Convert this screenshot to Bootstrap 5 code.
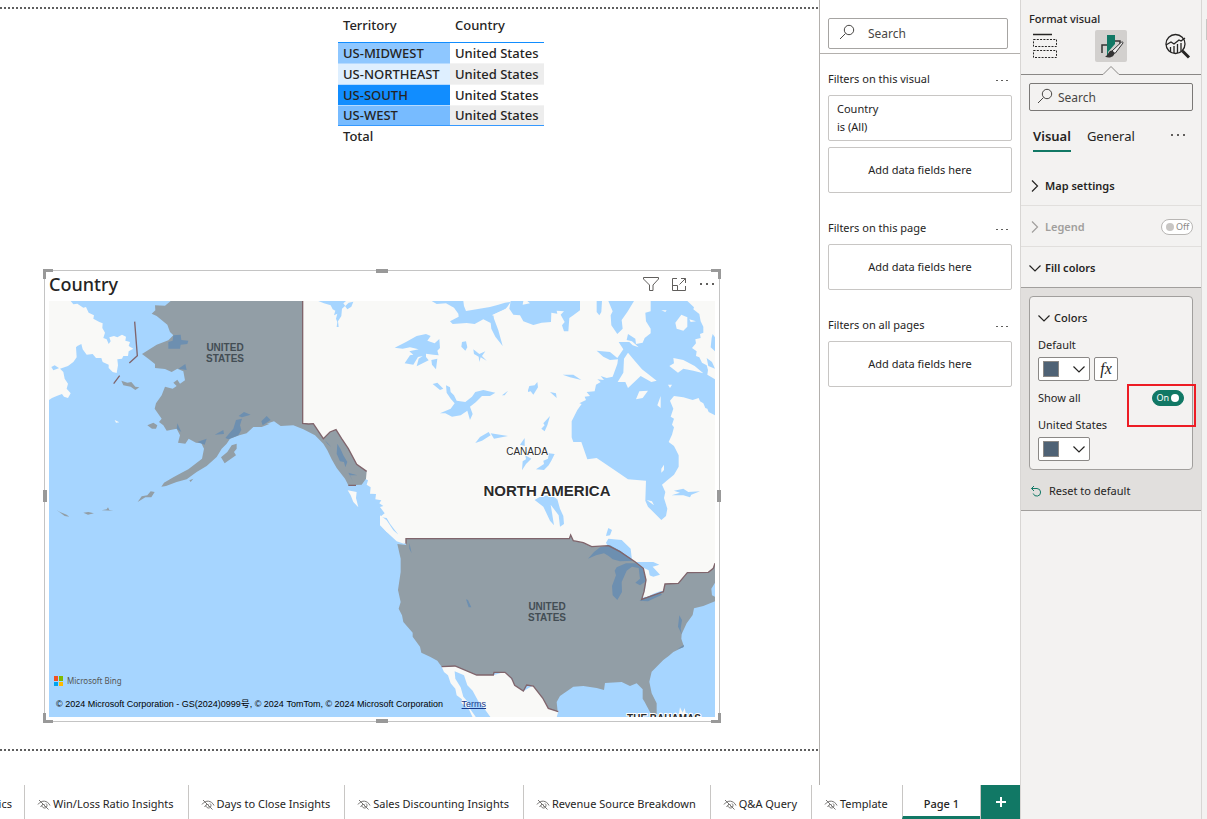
<!DOCTYPE html>
<html lang="en">
<head>
<meta charset="utf-8">
<meta name="viewport" content="width=device-width, initial-scale=1">
<title>Report editor</title>
<link href="https://cdn.jsdelivr.net/npm/bootstrap@5.3.0/dist/css/bootstrap.min.css" rel="stylesheet">
<style>
:root { --ink:#252423; --teal:#117865; --pane:#f3f2f1; }
body { font-family:"Noto Sans","Open Sans",sans-serif; font-size:11px; line-height:18px; color:var(--ink); background:#fff; }
button { font:inherit; color:inherit; }
svg { display:block; flex:none; }
.ico { fill:none; stroke:currentColor; }
.workspace { min-width:0; }
/* canvas */
.canvas { min-width:0; padding-top:7px; }
.sheet { min-height:743px; position:relative; }
.dots { height:2px; background:repeating-linear-gradient(90deg,#5f5f5f 0 2px,#fff 2px 4px); }
.grid-visual { margin:6px 0 0 338px; font-size:13px; line-height:19px; border-collapse:separate; border-spacing:0; }
.grid-visual th, .grid-visual td { padding:0 6px 0 5px; height:20px; font-weight:500; text-align:left; white-space:nowrap; }
.grid-visual tbody th, .grid-visual tbody td { height:21px; border-bottom:1px solid #f3f3f3; }
.grid-visual tbody th { border-bottom-color:#b5daff; min-width:112px; }
.grid-visual thead th { height:28px; padding-top:1px; vertical-align:top; border-bottom:1px solid #118dff; }
.grid-visual tbody tr:last-child > * { height:20px; border-bottom:1px solid #3599ff; }
.grid-visual tbody tr:nth-child(even) td { background:#ededed; }
.t-mid { background:#8ec7ff; } .t-ne { background:#deefff; } .t-so { background:#118dff; } .t-we { background:#77bbff; }
.map-visual { position:relative; margin:124px 99px 27px 44px; border:1px solid #c4c4c4; padding:0 4px 4px 4px; }
.map-title { font-size:18px; line-height:24px; font-weight:500; }
.map-head { height:30px; padding-bottom:4px; }
.map-head .btn { padding:0; border:0; color:#605e5c; }
.map-box { position:relative; overflow:hidden; }
.map-box > svg { width:100%; height:auto; }
.map-box text { font-family:"Liberation Sans",Arial,sans-serif; }
.bing { left:5px; bottom:27px; font-size:8px; line-height:18px; color:#555; }
.credits { left:7px; bottom:4px; font:9px/18px "Liberation Sans","Noto Sans CJK SC",sans-serif; color:#000; }
.credits a { color:#1a3c8c; }
.grip { position:absolute; background:#999; }
.grip.n, .grip.s { width:12px; height:4px; left:50%; margin-left:-6px; } .grip.n { top:-2px; } .grip.s { bottom:-2px; }
.grip.w, .grip.e { width:4px; height:12px; top:50%; margin-top:-6px; } .grip.w { left:-2px; } .grip.e { right:-2px; }
.corner { position:absolute; width:10px; height:10px; border:0 solid #999; }
.nw { left:-2px; top:-2px; border-width:3px 0 0 3px; } .ne { right:-2px; top:-2px; border-width:3px 3px 0 0; }
.sw { left:-2px; bottom:-2px; border-width:0 0 3px 3px; } .se { right:-2px; bottom:-2px; border-width:0 3px 3px 0; }
/* filters */
.filters { width:201px; flex:none; border-left:1px solid #b3b0ad; }
.find { position:relative; }
.find svg { position:absolute; left:8px; top:5px; pointer-events:none; color:#484644; }
.find input { width:100%; background:transparent; border:1px solid #a6a4a2; border-radius:2px; color:var(--ink); font-size:12px; outline:0; }
.find input::placeholder { color:#484644; opacity:1; }
.filters .find { padding:18px 12px 4px 8px; border-bottom:1px solid #b3b0ad; }
.filters .find svg { left:19px; top:24px; }
.filters .find input { height:31px; padding:0 8px 0 39px; }
.fgroup { padding:0 8px; }
.fgroup + .fgroup { padding-top:10px; }
.fhead { height:41px; padding-top:9px; }
.fhead button, .more { border:0; background:none; padding:0 3px; color:#605e5c; }
.fhead button { padding:4px 4px 0; }
.fcard { border:1px solid #c8c6c4; border-radius:2px; height:46px; background:#fff; }
.fcard + .fcard { margin-top:6px; }
/* page tabs */
.pages { height:34px; overflow:hidden; }
.pages a { flex:0 0 auto; gap:2px; color:var(--ink); text-decoration:none; border-left:1px solid #c8c6c4; padding:4px 14px 0 12px; white-space:nowrap; }
.pages a.cut { width:24px; border:0; padding:4px 12px 0 0; justify-content:flex-end !important; }
.pages a svg { color:#767472; }
.pages a.now { flex:1 0 auto; border-bottom:3px solid var(--teal); font-weight:500; padding:7px 12px 0; }
.pages button { width:40px; flex:none; background:var(--teal); color:#fff; border:0; border-left:1px solid #c8c6c4; padding:0; }
/* format pane */
.format { width:187px; flex:none; background:var(--pane); border-left:1px solid #d8d6d4; padding-right:5px; position:relative; }
.format-in { border-right:1px solid #d8d6d4; min-height:100%; }
.thumb { position:absolute; right:0; top:19px; width:1px; height:21px; background:#c8c6c4; }
.format h1 { font-size:11px; line-height:18px; font-weight:500; margin:0; padding:10px 8px 2px; }
.modes { padding:0 8px; height:44px; align-items:flex-start; }
.modes button { width:32px; height:32px; border:0; padding:0; border-radius:2px; background:none; }
.modes button.on { background:#d2d0ce; }
.notch { width:100%; height:9px; margin-top:-8px; }
.format .find { margin:8px 8px 0; }
.format .find input { height:28px; padding:0 8px 0 28px; border-color:#7a7876; }
.kinds { padding:14px 12px 0; gap:16px; font-size:13px; line-height:22px; height:54px; }
.kinds a { color:var(--ink); text-decoration:none; height:27px; }
.kinds a.on { border-bottom:2px solid var(--teal); font-weight:600; }
.acc { width:100%; height:41px; border:0; border-bottom:1px solid #e1dfdd; background:none; padding:1px 8px 0; gap:4px; font-weight:600; text-align:left; }
.acc.open { height:40px; border:0; }
.acc.dim { color:#a19f9d; }
.fill { background:#e1dfdd; border-top:1px solid #a19f9d; border-bottom:1px solid #a19f9d; padding:8px 8px 10px; }
.panel { background:var(--pane); border:1px solid #a19f9d; border-radius:4px; padding:12px 8px 8px; position:relative; }
.panel button, .swatch { height:24px; border:1px solid #8a8886; border-radius:2px; background:#fff; padding:0 4px; }
.panel .plain { border:0; background:none; padding:0; gap:4px; height:18px; font-weight:500; }
.cap { margin:9px 0 3px; }
.swatch { width:52px; }
.swatch i { width:16px; height:16px; background:#4f6275; border:1px solid #8a8886; }
.fx { width:24px; font:italic 16px/20px "Liberation Serif",serif !important; }
.toggle { width:32px; height:16px; border-radius:8px; border:1px solid #b8b6b4; background:#fff; color:#8a8886; font-size:9px; line-height:14px; padding:0 4px; gap:2px; font-weight:400; }
.toggle input { position:absolute; opacity:0; width:1px; height:1px; }
.toggle::before { content:""; width:8px; height:8px; border-radius:50%; background:#c8c6c4; flex:none; }
.toggle.yes { background:var(--teal); border-color:var(--teal); color:#fff; flex-direction:row-reverse; }
.toggle.yes::before { background:#fff; }
.callout { position:absolute; right:-4px; top:87px; width:69px; height:43px; border:2px solid #ed1c24; pointer-events:none; }
.reset { border:0; background:none; padding:0; margin:12px 0 0 1px; gap:7px; }
.reset svg { color:var(--teal); }
</style>
</head>
<body>
<svg width="0" height="0" class="position-absolute" aria-hidden="true">
  <symbol id="lens" viewBox="0 0 16 16"><circle cx="10" cy="6" r="4.700" fill="none" stroke="currentColor"/><path d="M6.500 9.500 1 15" stroke="currentColor"/></symbol>
  <symbol id="hid" viewBox="0 0 14 14"><path d="M1 7.500C3 4.600 5.500 4 7.500 4.200S12 6 13 8.500M5 8.500a2.500 2.500 0 1 0 4-2M7.500 7.500v2M2 3l9.500 9.500M3.500 10 6 7" fill="none" stroke="currentColor"/></symbol>
  <symbol id="down" viewBox="0 0 12 12"><path d="M.5 3.500 6 9l5.500-5.500" fill="none" stroke="currentColor" stroke-width="1.200"/></symbol>
  <symbol id="right" viewBox="0 0 12 12"><path d="M3 .5 8.500 6 3 11.500" fill="none" stroke="currentColor" stroke-width="1.200"/></symbol>
  <symbol id="dots" viewBox="0 0 16 4"><path d="M1 1h2v2H1zM7 1h2v2H7zM13 1h2v2h-2z" fill="currentColor"/></symbol>
  <symbol id="tinydots" viewBox="0 0 12 4"><path d="M0 1h2v1H0zM5 1h2v1H5zM10 1h2v1h-2z" fill="currentColor"/></symbol>
</svg>

<div class="d-flex min-vh-100">
  <div class="workspace flex-grow-1 d-flex flex-column">
    <div class="d-flex flex-grow-1">
      <main class="canvas flex-grow-1">
        <div class="sheet d-flex flex-column">
          <div class="dots"></div>
          <table class="grid-visual align-self-start">
            <thead><tr><th scope="col">Territory</th><th scope="col">Country</th></tr></thead>
            <tbody>
              <tr><th scope="row" class="t-mid">US-MIDWEST</th><td>United States</td></tr>
              <tr><th scope="row" class="t-ne">US-NORTHEAST</th><td>United States</td></tr>
              <tr><th scope="row" class="t-so">US-SOUTH</th><td>United States</td></tr>
              <tr><th scope="row" class="t-we">US-WEST</th><td>United States</td></tr>
            </tbody>
            <tfoot><tr><th scope="row">Total</th><td></td></tr></tfoot>
          </table>

          <section class="map-visual">
            <div class="map-head d-flex align-items-center">
              <div class="map-title me-auto">Country</div>
              <div class="d-flex gap-2 align-items-center">
                <button class="btn me-1" aria-label="Filters"><svg class="ico" width="16" height="16"><path d="M.5 1.500h15v1.500L10 9v5.500H6.500V9L.5 3z"/></svg></button>
                <button class="btn me-1" aria-label="Focus mode"><svg class="ico" width="16" height="16"><path d="M6 2.500H1.500v12h13V10M10 2.500h4.500V7M14.500 2.500 8.500 8.500M1.500 9.500h5v5"/></svg></button>
                <button class="btn" aria-label="More options"><svg width="16" height="4"><use href="#dots"/></svg></button>
              </div>
            </div>
            <div class="map-box">
              <svg viewBox="0 0 666 416" role="img" aria-label="Map of North America, United States filled">
                <rect width="666" height="416" fill="#a6d5ff"/>
                <g transform="translate(-9 -39) scale(.33333)">
                  <g fill="#f9f9f7">
                    <!-- Siberia -->
                    <path d="M27 117H92L100 127 112 125 130 137 138 135 146 152 162 160 160 170 178 180 188 184 187 198 195 212 190 228 200 232 206 246 212 238 208 226 222 222 232 226 246 218 258 224 256 236 270 240 266 252 280 260 266 268 264 282 250 282 246 290 232 292 234 310 230 333 218 330 206 318 206 308 188 300 184 288 168 288 158 276 140 278 128 262 124 246 112 252 108 256 110 286 100 300 84 312 60 320 44 310 34 315 40 325 58 318 70 330 74 350 84 365 80 380 92 394 84 408 72 404 66 396 50 402 36 408 27 414Z"/>
                    <!-- Canada -->
                    <path d="M788 117H2025V930L1780 1020 1098 829 1098 845 1085 840 1060 815 1040 810 1020 785 1032 790 1058 805 1075 818 1050 785 1040 768 1020 765 1034 754 1020 735 1030 732 1018 724 1024 715 1006 712 1008 696 990 695 992 676 980 668 984 655 974 650 950 607 788 483Z"/>
                    <path d="M923 685 950 690 948 708 955 736 940 720 932 700ZM1020 760 1040 775 1060 805 1075 820 1094 846 1070 838 1040 810 1020 790Z"/>
                    <!-- Mexico -->
                    <path d="M1205 1214 1245 1212 1310 1239H1362L1395 1229 1425 1265 1450 1288 1480 1270 1510 1300 1555 1348 1550 1366H1352L1330 1336 1315 1318 1298 1286 1282 1270 1272 1240 1244 1228 1246 1250 1262 1276 1270 1304 1284 1320 1290 1340 1308 1366H1298L1286 1340 1264 1322 1266 1312 1250 1300 1246 1280 1232 1264 1224 1240 1212 1230Z"/>
                    <path d="M224 474 238 481 228 482ZM1915 1366 1920 1336 1928 1352 1934 1338 1940 1366Z"/>
                  </g>
                  <!-- northern waters -->
                  <g fill="#a6d5ff">
                    <path d="M835 117H918L910 124 916 132 926 122 940 119 934 134 922 142 915 132 906 140 904 162 894 178 896 195 890 195 892 180 888 170 892 155 882 160 886 146 878 142 872 130 852 124Z"/>
                    <path d="M1175 117H1270L1272 132 1278 147 1350 135 1375 128 1395 122 1412 120 1398 140 1360 158 1362 170 1375 205 1388 252 1366 224 1354 200 1352 183 1330 172 1304 186 1280 183 1238 186 1230 178 1256 164 1255 155 1242 137 1218 124 1190 126Z"/>
                    <path d="M1412 117H1450L1448 128 1470 124 1462 117H1620V145L1600 160 1588 168 1585 208 1572 208 1566 190 1574 180 1562 158 1572 148 1550 146 1552 155 1534 152 1533 180 1505 182 1480 189 1450 178 1440 160 1420 158 1408 140Z"/>
                    <path d="M1670 117H1686L1684 150 1678 160 1670 150ZM1705 117H1782L1762 150 1745 174 1748 200 1732 216 1714 190 1712 160 1718 148Z"/>
                    <path d="M1064 257 1098 240 1130 222 1158 216 1172 222 1162 236 1184 244 1198 231 1200 258 1192 266 1196 280 1180 278 1158 275 1158 285 1166 295 1130 313 1136 290 1148 282 1134 285 1120 308 1094 304 1110 280 1120 278 1108 268 1136 262 1110 256 1088 260ZM1174 294 1192 290 1188 322 1176 308ZM1266 240 1278 238 1282 256 1276 266 1264 254ZM1300 262 1318 276 1336 268 1326 282 1340 296 1322 286 1318 300 1316 284 1302 276Z"/>
                    <path d="M1178 366 1192 362 1210 380 1200 384ZM1218 370 1230 376 1232 390 1242 400 1250 416 1276 420 1296 404 1306 390 1330 384 1366 392 1350 402 1326 402 1308 420 1290 434 1298 456 1290 474 1282 446 1262 460 1236 464 1216 454 1200 454 1232 440 1244 424 1232 410 1220 392ZM1306 543 1320 525 1346 510 1352 520 1326 536ZM1352 514 1404 522 1362 530Z"/>
                    <path d="M1464 385 1468 372 1484 370 1492 360 1494 376 1480 398 1472 388 1464 390ZM1530 390 1548 394 1550 408ZM1386 400 1404 386 1394 400ZM1336 386 1350 394 1336 400ZM1568 338 1600 338 1624 354 1590 346ZM1510 484 1530 462 1522 490 1514 508 1504 500 1514 490ZM1440 548 1454 528 1454 552ZM1446 625 1448 598 1458 592 1456 580 1474 590 1458 606ZM1488 622 1512 606 1510 596 1524 590 1526 574 1544 576 1534 596 1526 610 1512 624Z"/>
                    <!-- Hudson Bay and the eastern arctic sea -->
                    <path d="M1832 117H1942L1962 136 1960 142 1978 156 1982 178 1990 194 1990 212 1980 216 1982 228 1966 232 1968 244 1956 258 1970 268 1968 282 1978 286 1986 302 2000 310 2004 324 2002 338 2025 352V460L2006 450 2002 440 1996 438 1990 424 1980 418 1976 408 1958 414 1930 406 1902 402 1890 416 1900 440 1892 464 1902 470 1896 488 1902 496 1896 518 1886 540 1902 552 1916 580V614L1902 638 1880 656 1866 668 1876 690 1872 708 1882 740 1878 762 1864 774 1840 750 1824 734 1816 716 1818 656 1764 652 1720 622 1670 588 1642 592 1624 540 1600 540 1595 526V478L1612 444 1625 426 1618 424 1638 414 1634 404 1650 402 1640 390 1664 388 1668 368 1682 360 1672 352 1692 354 1682 342 1700 348 1718 344 1732 306 1734 292 1710 294 1690 284 1670 266 1710 270 1732 288 1750 262 1736 240 1768 240 1778 250 1796 256 1776 238 1760 234 1764 216 1786 230 1788 246 1808 242 1814 228 1832 214 1832 200 1818 178 1816 152 1832 148Z"/>
                    <path d="M2015 228 2018 216 2025 226V268L2012 256ZM2000 288 2016 300 2025 320 2005 312ZM1895 700 1920 692 1902 686 1930 680 1945 690 1980 688 1954 698 1950 706 1930 700Z"/>
                    <!-- lakes of Manitoba and Ontario -->
                    <path d="M1484 714 1504 702 1534 700 1552 712 1560 740 1570 762 1572 786 1560 794 1556 760 1532 728 1536 752 1542 790 1530 776 1510 734ZM1700 814 1705 798 1716 804 1710 820 1698 822ZM1698 842 1705 830 1745 834 1772 860 1776 895 1740 872 1705 855ZM1780 900H1840L1858 908 1838 914 1860 938 1840 944 1824 938 1832 974 1812 1012 1850 988 1878 986 1862 994 1810 1010 1796 970Z"/>
                  </g>
                  <g fill="#f9f9f7">
                    <path d="M1733 360 1750 332 1752 290 1764 272 1784 296 1806 322 1850 356 1834 360 1802 342 1764 378 1756 360ZM1788 412 1798 388 1824 386 1808 408ZM1852 430 1862 402V438ZM1906 182 1924 158 1942 166 1942 194 1930 206 1910 200ZM1948 172 1968 178 1952 180ZM1888 312 1902 304 1900 288 1930 294 1964 312 1990 334 1960 326 1930 320 1914 332ZM1864 620 1872 608 1872 624 1864 632ZM1884 368 1896 368 1890 378ZM1864 145 1880 145 1876 150ZM1820 714 1836 718 1842 730ZM1355 160 1395 142 1404 134 1402 150 1375 162Z"/>
                    <path d="M1806 1008 1815 985 1818 960 1812 935 1804 914 1826 925 1834 965 1850 970 1872 965 1868 985 1840 995Z"/>
                  </g>
                  <!-- Alaska -->
                  <path fill="#929ea6" d="M392 117 375 131 345 130 346 145 335 155 350 162 382 188 390 210 400 220 385 235 350 248 306 276 325 290 345 306 345 318 375 321 395 330 412 320 430 328 435 355 420 365 412 353 400 362 410 372 398 380 375 374 365 400 348 424 344 440 365 470 357 480 370 490 380 506 410 500 420 520 414 542 436 545 446 530 468 542 484 544 492 560 486 590 445 622 425 632 400 646 372 662 364 674 378 672 410 660 440 652 470 630 500 612 530 585 545 560 560 545 570 530 598 520 620 514 640 495 665 495 690 485 680 485 702 478 722 492 760 490 790 502 825 520 850 545 862 565 875 592 890 618 915 650 925 670 965 668 978 650 980 628 950 607 925 560 905 530 888 503 870 510 850 530 820 485 806 486 788 484V117Z"/>
                  <path fill="#929ea6" d="M244 356 262 362 274 360 286 374 298 376 286 384 272 374 250 370ZM322 490 340 482 352 490 348 500 336 500ZM543 586 562 570 575 550 590 545 590 560 582 570 588 580 554 604ZM293 720 305 703 322 700 332 688 344 690 334 706 316 706ZM185 745 200 742 204 736 208 744 220 746ZM130 752 145 750 162 754 144 758ZM448 655 460 650 452 660ZM50 744 60 750 80 758 88 764 74 762Z"/>
                  <!-- contiguous states -->
                  <path fill="#929ea6" d="M1098 829H1588L1592 819 1600 836 1630 842 1655 854 1705 851 1740 869 1785 899 1810 919 1818 954 1812 989 1805 1012 1870 989 1875 966 1915 964 1942 932 2005 931 2020 919 2025 904V962L2014 980 2016 1000 2025 1004V1018L1990 1032 1962 1039 1958 1059 1940 1084 1925 1116 1924 1130 1932 1154 1900 1170 1886 1182 1870 1194 1850 1214 1835 1229 1828 1259 1835 1294 1850 1324V1365L1835 1360 1814 1320 1808 1310V1282L1790 1264 1770 1272 1745 1260 1695 1263 1692 1284 1670 1278 1630 1272 1600 1274 1560 1302 1550 1320 1553 1349 1525 1339 1508 1308 1480 1272 1460 1269 1450 1287 1424 1270 1415 1249 1395 1231H1362L1360 1239H1310L1245 1212 1205 1214 1192 1196 1170 1184 1144 1172 1140 1154 1118 1124V1112L1090 1080 1086 1060 1076 1040 1082 1020 1074 984 1082 930V890L1072 846 1098 849Z"/>
                  <!-- water under the filled shape -->
                  <path fill="#6d8fb0" d="M385 240 398 236 400 220 422 218 424 234 445 236 442 246 422 248 420 260 385 260ZM415 320 436 306 440 324ZM556 528 580 500 588 474 606 470 600 490 604 504 595 520 566 532ZM524 518 550 504 552 516ZM596 462 612 450 632 458 606 466ZM664 478 680 462 692 474 668 490ZM410 500 412 484 424 510ZM472 540 500 530 494 548ZM855 535 874 555 862 545ZM892 545 902 562 910 580 922 600 916 616 912 600 900 598 890 575ZM925 632 952 640 930 640 940 660ZM1644 890 1662 870 1680 856 1710 850 1740 866 1780 896 1740 898 1718 892 1706 882 1692 874 1668 880ZM1730 916 1758 904 1786 904 1810 920 1818 958 1800 970 1786 962 1800 950 1796 918 1776 914 1760 926 1745 960 1746 990 1732 1014 1718 1000 1716 972 1728 940 1724 926ZM1798 1016 1812 1008 1860 992 1866 998 1824 1018ZM1278 1012 1284 1014 1294 1036 1286 1036ZM1918 1060 1926 1074 1922 1100 1926 1118 1914 1094ZM1108 842 1115 874 1108 860ZM1912 1162 1932 1148 1930 1156Z"/>
                  <g fill="none" stroke="#80656c" stroke-width="4">
                    <path d="M788 117V484L806 486 820 485 850 530 870 510 888 503 905 530 925 560 950 607 980 628M925 670H948M1098 845V830H1588L1592 819 1600 836 1630 842 1655 854 1705 851 1740 869 1785 899 1810 919 1818 954 1812 989 1805 1012 1870 989 1875 966 1915 964 1942 932 2005 931 2020 919 2025 904M1205 1214 1245 1212 1310 1239H1360L1362 1231H1395L1415 1249 1424 1270 1450 1287 1460 1269 1480 1272 1508 1308 1525 1339 1555 1349"/>
                    <path d="M284 179 292 281 268 303M239 341 221 365"/>
                  </g>
                </g>
                <g font-weight="bold" text-anchor="middle" fill="#434d54" font-size="10">
                  <text x="176" y="50">UNITED</text><text x="176" y="61">STATES</text>
                  <text x="498" y="309">UNITED</text><text x="498" y="320">STATES</text>
                </g>
                <g text-anchor="middle" fill="#2b2b2b" stroke="#fff" stroke-width="2" paint-order="stroke">
                  <text x="478" y="154" font-size="10" stroke-width="1">CANADA</text>
                  <text x="498" y="195" font-size="15" font-weight="bold">NORTH AMERICA</text>
                  <text x="615" y="421" font-size="10" font-weight="bold">THE BAHAMAS</text>
                </g>
              </svg>
              <div class="bing position-absolute d-flex align-items-center gap-1"><svg width="9" height="10"><path fill="#f25022" d="M0 0h4v5H0z"/><path fill="#7fba00" d="M5 0h4v5H5z"/><path fill="#00a4ef" d="M0 6h4v4H0z"/><path fill="#ffb900" d="M5 6h4v4H5z"/></svg>Microsoft Bing</div>
              <div class="credits position-absolute text-nowrap">© 2024 Microsoft Corporation - GS(2024)0999号, © 2024 TomTom, © 2024 Microsoft Corporation <a class="ms-3" href="#">Terms</a></div>
            </div>
            <span class="grip n"></span><span class="grip s"></span><span class="grip w"></span><span class="grip e"></span>
            <span class="corner nw"></span><span class="corner ne"></span><span class="corner sw"></span><span class="corner se"></span>
          </section>
          <div class="dots mt-auto"></div>
        </div>
      </main>

      <aside class="filters">
        <div class="find"><svg width="16" height="16" aria-hidden="true"><use href="#lens"/></svg><input type="text" placeholder="Search" aria-label="Search filters"></div>
        <section class="fgroup">
          <div class="fhead d-flex justify-content-between align-items-center"><span>Filters on this visual</span><button aria-label="More"><svg width="12" height="4"><use href="#tinydots"/></svg></button></div>
          <div class="fcard px-2 d-flex flex-column justify-content-center"><span>Country</span><span>is (All)</span></div>
          <div class="fcard d-flex align-items-center justify-content-center">Add data fields here</div>
        </section>
        <section class="fgroup">
          <div class="fhead d-flex justify-content-between align-items-center"><span>Filters on this page</span><button aria-label="More"><svg width="12" height="4"><use href="#tinydots"/></svg></button></div>
          <div class="fcard d-flex align-items-center justify-content-center">Add data fields here</div>
        </section>
        <section class="fgroup">
          <div class="fhead d-flex justify-content-between align-items-center"><span>Filters on all pages</span><button aria-label="More"><svg width="12" height="4"><use href="#tinydots"/></svg></button></div>
          <div class="fcard d-flex align-items-center justify-content-center">Add data fields here</div>
        </section>
      </aside>
    </div>

    <nav class="pages d-flex" aria-label="Pages">
      <a href="#" class="cut d-flex align-items-center">ics</a>
      <a href="#" class="d-flex align-items-center justify-content-center"><svg width="14" height="14"><use href="#hid"/></svg>Win/Loss Ratio Insights</a>
      <a href="#" class="d-flex align-items-center justify-content-center"><svg width="14" height="14"><use href="#hid"/></svg>Days to Close Insights</a>
      <a href="#" class="d-flex align-items-center justify-content-center"><svg width="14" height="14"><use href="#hid"/></svg>Sales Discounting Insights</a>
      <a href="#" class="d-flex align-items-center justify-content-center"><svg width="14" height="14"><use href="#hid"/></svg>Revenue Source Breakdown</a>
      <a href="#" class="d-flex align-items-center justify-content-center"><svg width="14" height="14"><use href="#hid"/></svg>Q&amp;A Query</a>
      <a href="#" class="d-flex align-items-center justify-content-center"><svg width="14" height="14"><use href="#hid"/></svg>Template</a>
      <a href="#" class="now d-flex align-items-center justify-content-center">Page 1</a>
      <button aria-label="New page"><svg class="mx-auto" width="12" height="12"><path d="M6 1v10M1 6h10" stroke="#fff" stroke-width="2"/></svg></button>
    </nav>
  </div>

  <aside class="format">
    <span class="thumb"></span>
    <div class="format-in">
      <h1>Format visual</h1>
      <div class="modes d-flex justify-content-between">
        <button aria-label="Build"><svg class="ico" width="32" height="32"><path d="M4 4.500h19" stroke-width="1.500"/><path d="M4.500 9.500h23v7h-23zM4.500 20.500h23v7h-23z" stroke-dasharray="2 1.300"/></svg></button>
        <button class="on" aria-label="Format"><svg width="32" height="32"><path d="M7 23V15h5M20 11h5v4" fill="none" stroke="#333" stroke-width="1.500"/><path d="M12 5h8v9l-7 8v5h-1z" fill="#117865"/><path d="M28 13 20 23.500l-3-2.500 9-8.500c1-.8 2.500-.5 2 .5z" fill="#eee" stroke="#333"/><path d="M17 20.500c-4 0-3.500 5-7 6 3.500 2 9 1 9.500-3.500z" fill="#333"/></svg></button>
        <button aria-label="Analytics"><svg class="ico" width="32" height="32"><circle cx="14.500" cy="14" r="9.500" stroke-width="1.300"/><path d="M21.500 21l6.500 6.500" stroke-width="3"/><path d="M5 15l5-3 3 2 5-4 2 1 4-3M9.500 22v-5M13 23v-7M16.500 23v-9M20 21v-8" stroke-width="1.300"/></svg></button>
      </div>
      <svg class="notch" viewBox="0 0 180 9" preserveAspectRatio="none"><path d="M0 8.500h82l8-8 8 8h82" fill="#f3f2f1" stroke="#8a8886"/></svg>
      <div class="find"><svg width="16" height="16" aria-hidden="true"><use href="#lens"/></svg><input type="text" placeholder="Search" aria-label="Search settings"></div>
      <div class="kinds d-flex"><a href="#" class="on">Visual</a><a href="#">General</a><button class="more ms-auto align-self-start pt-2" aria-label="More options"><svg width="16" height="4"><use href="#dots"/></svg></button></div>
      <button class="acc d-flex align-items-center"><svg width="12" height="12"><use href="#right"/></svg>Map settings</button>
      <div class="acc dim d-flex align-items-center"><svg width="12" height="12"><use href="#right"/></svg>Legend
        <label class="toggle ms-auto d-flex align-items-center position-relative"><input type="checkbox" role="switch" aria-label="Legend">Off</label></div>
      <button class="acc open d-flex align-items-center"><svg width="12" height="12"><use href="#down"/></svg>Fill colors</button>
      <div class="fill">
        <div class="panel">
          <button class="plain d-flex align-items-center"><svg width="12" height="12"><use href="#down"/></svg>Colors</button>
          <div class="cap">Default</div>
          <div class="d-flex gap-1">
            <button class="swatch d-flex align-items-center justify-content-between" aria-label="Default color"><i></i><svg width="12" height="12"><use href="#down"/></svg></button>
            <button class="fx p-0" aria-label="Conditional formatting">fx</button>
          </div>
          <div class="d-flex align-items-center mt-2"><span>Show all</span><label class="toggle yes ms-auto d-flex align-items-center position-relative"><input type="checkbox" role="switch" aria-label="Show all" checked>On</label></div>
          <div class="cap">United States</div>
          <button class="swatch d-flex align-items-center justify-content-between" aria-label="United States color"><i></i><svg width="12" height="12"><use href="#down"/></svg></button>
          <span class="callout"></span>
        </div>
        <button class="reset d-flex align-items-center"><svg class="ico" width="12" height="12"><path d="M1.500 3.500H7a3.800 3.800 0 1 1-3.800 5M4 1 1.500 3.500 4 6"/></svg>Reset to default</button>
      </div>
    </div>
  </aside>
</div>
<script src="https://cdn.jsdelivr.net/npm/bootstrap@5.3.0/dist/js/bootstrap.bundle.min.js"></script>
</body>
</html>
